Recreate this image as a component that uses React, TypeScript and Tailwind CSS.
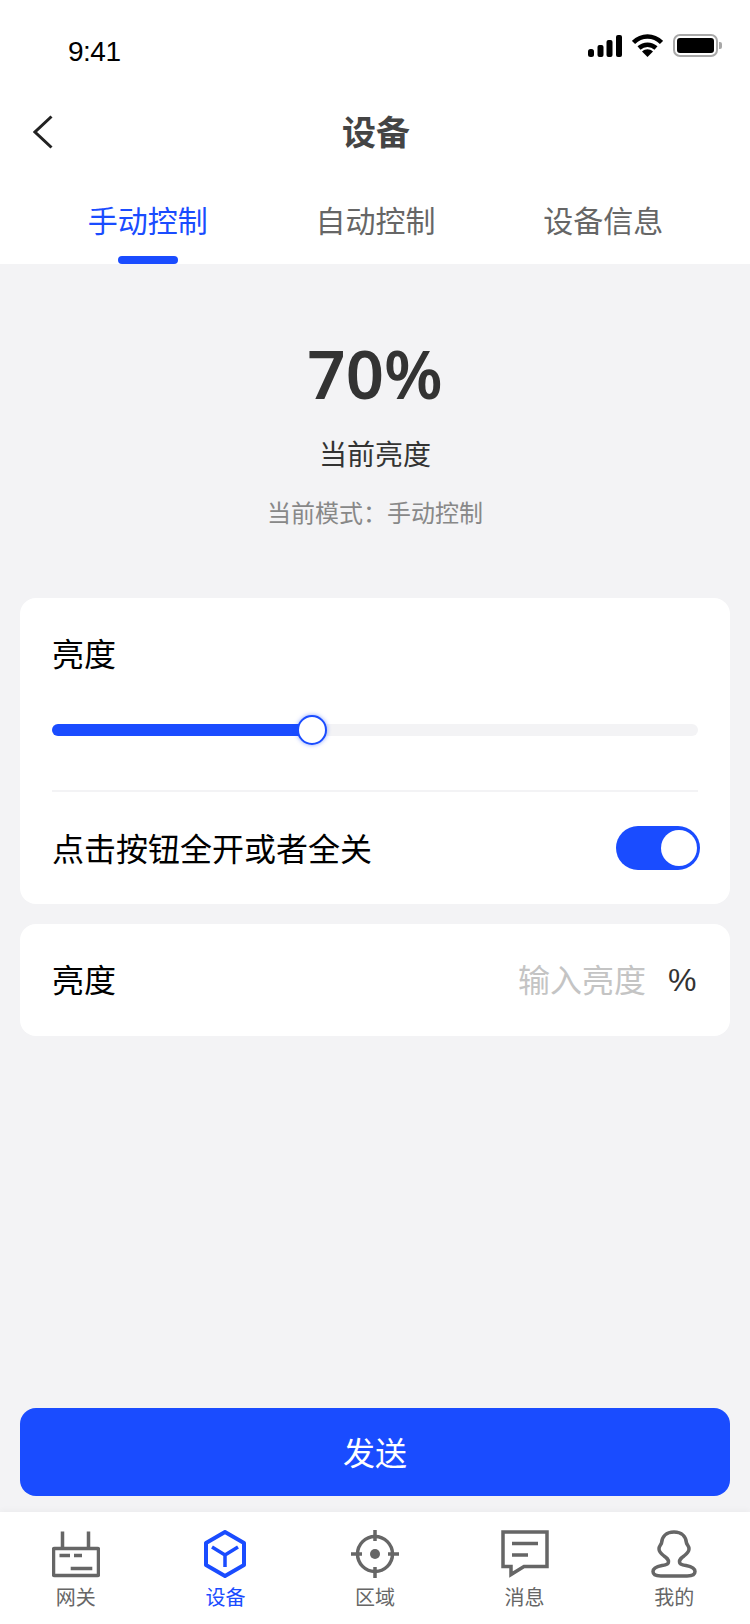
import type { ReactNode } from 'react';

const CJK = "font-['Noto_Sans_CJK_SC','Noto_Sans',sans-serif]";

function StatusIcons() {
  return (
    <div className="flex items-center">
      <svg width="34" height="22" viewBox="0 0 34 22" className="mr-[10px]">
        <rect x="0" y="14" width="6" height="8" rx="2.5" fill="#000" />
        <rect x="9.500" y="10" width="6" height="12" rx="2" fill="#000" />
        <rect x="18.500" y="5" width="6" height="17" rx="2" fill="#000" />
        <rect x="28" y="0" width="6" height="22" rx="2" fill="#000" />
      </svg>
      <svg width="31" height="23" viewBox="0 0 31 23" className="mr-[10px]">
        <path d="M1.500 8.500C9.500 .5 21.500 .5 29.500 8.500" fill="none" stroke="#000" strokeWidth="4.500" />
        <path d="M7 14C12 9.500 19 9.500 24 14" fill="none" stroke="#000" strokeWidth="4.500" />
        <path d="M10 17.500C13.500 14.500 17.500 14.500 21 17.500L15.500 23Z" fill="#000" />
      </svg>
      <div className="flex items-center">
        <div className="flex h-[23px] w-[45px] items-center justify-center rounded-[7px] border-2 border-[#a8a8a8]">
          <div className="h-[15px] w-[37px] rounded-[3px] bg-black" />
        </div>
        <div className="ml-[1px] h-[7px] w-[3px] rounded-r-[2px] bg-[#a8a8a8]" />
      </div>
    </div>
  );
}

function Tab({ label, active }: { label: string; active?: boolean }) {
  return (
    <div className="relative flex h-full flex-1 justify-center pt-[3px]">
      <span className={`text-[30px] leading-[44px] ${active ? 'text-[#1a4cff]' : 'text-[#666666]'}`}>
        {label}
      </span>
      {active && (
        <div className="absolute bottom-0 left-1/2 h-2 w-[60px] -translate-x-1/2 rounded-full bg-[#1a4cff]" />
      )}
    </div>
  );
}

function NavItem({ label, active, children }: { label: string; active?: boolean; children: ReactNode }) {
  return (
    <div className="flex flex-1 flex-col items-center">
      {children}
      <span className={`mt-[5px] text-[20px] leading-[28px] ${active ? 'text-[#1a4cff]' : 'text-[#666666]'}`}>
        {label}
      </span>
    </div>
  );
}

function GatewayIcon() {
  return (
    <svg width="48" height="48" viewBox="0 0 48 48" fill="none" stroke="#666666" strokeWidth="3.500">
      <path d="M10.500 1.500v17M36.500 1.500v17" />
      <rect x="1.500" y="18.500" width="45" height="27" rx="1" />
      <path d="M7.500 25.500h10.500M22 25.500h8M18.700 38.500h21.600" />
    </svg>
  );
}

function CubeIcon() {
  return (
    <svg width="48" height="48" viewBox="0 0 48 48" fill="none" stroke="#1a4cff" strokeWidth="4" strokeLinejoin="round">
      <path d="M24 2L43 13V35L24 46L5 35V13Z" />
      <path d="M11 17L24 25L37 17M24 25V37" strokeWidth="3.500" />
    </svg>
  );
}

function TargetIcon() {
  return (
    <svg width="50" height="50" viewBox="0 0 50 50" fill="none" stroke="#666666" strokeWidth="3.500" className="-my-[1px]">
      <circle cx="25" cy="25" r="17.500" />
      <path d="M25 1v11M25 38v11M1 25h11M38 25h11" />
      <circle cx="25" cy="25" r="5" fill="#666666" stroke="none" />
    </svg>
  );
}

function MessageIcon() {
  return (
    <svg width="48" height="48" viewBox="0 0 48 48" fill="none" stroke="#666666" strokeWidth="3.500">
      <path d="M2 2H46V36.500H23L10 44.500V36.500H2Z" />
      <path d="M11 13.500H37M11 25H27" />
    </svg>
  );
}

function PersonIcon() {
  return (
    <svg width="48" height="48" viewBox="0 0 48 48" fill="none" stroke="#666666" strokeWidth="3.500">
      <path d="M24 2C32 2 36 7 36.500 13C37 15 39 16 39 19C39 22 36.500 24 34 26C31 28 29.500 29 29.500 32C29.500 34 32 35 36 35.500C41 36.500 45 38 45 41.500C45 45 41 46 37 46L11 46C7 46 3 45 3 41.500C3 38 7 36.500 12 35.500C16 35 18.500 34 18.500 32C18.500 29 17 28 14 26C11.500 24 9 22 9 19C9 16 11 15 11.500 13C12 7 16 2 24 2Z" />
    </svg>
  );
}

export default function App() {
  return (
    <div className={`flex h-[1624px] w-[750px] flex-col overflow-hidden bg-[#f3f3f5] ${CJK}`}>
      <div className="bg-white">
        <div className="flex h-[88px] items-start justify-between pl-[68px] pr-[28px] pt-[35px]">
          <span className="font-['Liberation_Sans',sans-serif] text-[28px] leading-[34px] tracking-[-0.5px] text-black">9:41</span>
          <div className="-mt-[1px]">
            <StatusIcons />
          </div>
        </div>
        <div className="relative flex h-[88px] items-center justify-center pb-[2px] pl-[2px]">
          <svg width="20" height="34" viewBox="0 0 20 34" fill="none" stroke="#222222" strokeWidth="3" className="absolute left-[33px] top-[27px]">
            <path d="M18.500 1.500L2 17L18.500 32.500" />
          </svg>
          <span className="text-[34px] font-bold leading-[44px] text-[#444444]">设备</span>
        </div>
        <div className="flex h-[88px] pl-[34px] pr-[33px] pt-[18px]">
          <Tab label="手动控制" active />
          <Tab label="自动控制" />
          <Tab label="设备信息" />
        </div>
      </div>

      <div className="flex flex-1 flex-col px-5">
        <div className="flex flex-col items-center pt-[67px]">
          <span className="font-['Noto_Sans',sans-serif] text-[67px] font-semibold leading-[84px] text-[#333333]">70%</span>
          <span className="mt-[18px] text-[28px] leading-[40px] text-[#333333]">当前亮度</span>
          <span className="mt-[22px] text-[24px] leading-[34px] text-[#888888]">当前模式：手动控制</span>
        </div>

        <div className="mt-[69px] rounded-2xl bg-white px-8">
          <div className="pt-[31px] text-[32px] leading-[46px] text-black">亮度</div>
          <div className="relative mt-[49px] h-3 rounded-full bg-[#f3f3f5]">
            <div className="h-3 w-[260px] rounded-full bg-[#1a4cff]" />
            <div className="absolute left-[245px] top-[-9px] h-[30px] w-[30px] rounded-full border-2 border-[#1a4cff] bg-white shadow-[0_0_4px_#1a4cff80]" />
          </div>
          <div className="mt-[54px] h-[2px] bg-[#f3f3f5]" />
          <div className="flex h-[112px] items-center justify-between">
            <span className="pb-[2px] text-[32px] leading-[46px] text-black">点击按钮全开或者全关</span>
            <div className="mr-[-2px] flex h-[44px] w-[84px] items-center justify-end rounded-full bg-[#1a4cff] pr-[3px]">
              <div className="h-[36px] w-[36px] rounded-full bg-white" />
            </div>
          </div>
        </div>

        <div className="mt-5 flex h-[112px] items-center justify-between rounded-2xl bg-white px-8">
          <span className="pb-[4px] text-[32px] leading-[46px] text-black">亮度</span>
          <div className="flex items-center">
            <span className="pb-[4px] text-[32px] leading-[46px] text-[#c4c4c4]">输入亮度</span>
            <span className="ml-[22px] w-[30px] font-['Liberation_Sans',sans-serif] text-[32px] leading-[46px] text-[#333333]">%</span>
          </div>
        </div>

        <button className="mt-auto mb-4 h-[88px] rounded-2xl bg-[#1a4cff] pb-[2px] text-[32px] text-white">发送</button>
      </div>

      <div className="flex h-[112px] bg-white px-[1px] pt-[18px] shadow-[0_-2px_6px_rgba(0,0,0,0.03)]">
        <NavItem label="网关"><GatewayIcon /></NavItem>
        <NavItem label="设备" active><CubeIcon /></NavItem>
        <NavItem label="区域"><TargetIcon /></NavItem>
        <NavItem label="消息"><MessageIcon /></NavItem>
        <NavItem label="我的"><PersonIcon /></NavItem>
      </div>
    </div>
  );
}
